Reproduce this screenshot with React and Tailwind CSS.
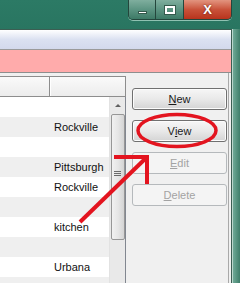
import React from 'react';

const rows = ['', 'Rockville', '', 'Pittsburgh', 'Rockville', '', 'kitchen', '', 'Urbana', ''];

const Btn = ({ children, disabled }) => (
  <div
    className={
      disabled
        ? 'h-[22px] w-[95px] rounded-[3px] border border-[#b5b9bc] bg-[#f4f4f4] text-[#a3a3a3] flex items-center justify-center text-[11px]'
        : 'h-[22px] w-[95px] rounded-[3px] border border-[#707070] bg-linear-to-b from-[#f6f6f6] via-[#e9e9e9] to-[#d4d4d4] text-[#1a1a1a] flex items-center justify-center text-[11px] shadow-[inset_0_0_0_1px_#fcfcfc]'
    }
  >
    {children}
  </div>
);

const Row = ({ text, odd }) => (
  <div className={`h-[20px] flex items-center ${odd ? 'bg-[#efefef]' : 'bg-white'}`}>
    <div className="w-[54px] shrink-0" />
    <span className="text-[11px] text-[#111]">{text}</span>
  </div>
);

export default function App() {
  return (
    <div
      className="relative w-[240px] h-[283px] overflow-hidden bg-linear-to-b from-[#2c7a65] via-[#1d6451] to-[#4e9580]"
      style={{ fontFamily: '"Liberation Sans", Arial, sans-serif' }}
    >
      {/* title bar */}
      <div className="h-[29px] flex">
        <div className="ml-auto mr-[8px] h-[20px] flex rounded-b-[5px] border border-t-0 border-[#24463c] overflow-hidden shadow-[0_1px_0_#8fc2b2]">
          <div className="w-[27px] h-full border-r border-[#24463c] bg-linear-to-b from-[#7fae9e] via-[#5c9482] to-[#3d7a66] flex items-center justify-center">
            <div className="w-[9px] h-[3px] bg-white border border-[#34594c] mt-[5px]" />
          </div>
          <div className="w-[28px] h-full border-r border-[#24463c] bg-linear-to-b from-[#7fae9e] via-[#5c9482] to-[#3d7a66] flex items-center justify-center">
            <div className="w-[10px] h-[8px] border-2 border-white outline outline-1 outline-[#34594c]" />
          </div>
          <div className="w-[47px] h-full bg-linear-to-b from-[#e2947f] via-[#c9523a] to-[#b8331c] flex items-center justify-center">
            <span className="text-white font-bold text-[13px] leading-none" style={{ textShadow: '0 0 2px #5a1a0c' }}>X</span>
          </div>
        </div>
      </div>

      {/* body */}
      <div className="flex h-[254px]">
        <div className="w-[232px] h-full border-r border-t border-[#3c5e53] bg-[#f0f0f0] flex flex-col">
          <div className="h-[20px] shrink-0 bg-linear-to-b from-white via-[#dbe1f1] to-[#d3d9ec] border-b border-[#9a9a9a]" />
          <div className="h-[22px] shrink-0 bg-[#ffabab]" />
          <div className="flex-1 flex border-t border-[#8e8e8e] min-h-0">
            {/* list view */}
            <div className="w-[126px] pt-[3px] flex flex-col">
              <div className="h-[21px] shrink-0 flex border-t border-b border-[#8d8d8d] border-r bg-linear-to-b from-[#fafafa] to-[#ececec]">
                <div className="w-[50px] border-r border-[#8d8d8d] shadow-[1px_0_0_#fff]" />
                <div className="flex-1" />
              </div>
              <div className="flex-1 flex border-r border-[#828790] min-h-0">
                <div className="w-[109px] overflow-hidden">
                  {rows.map((r, i) => (
                    <Row key={i} text={r} odd={i % 2 === 1} />
                  ))}
                </div>
                {/* scrollbar */}
                <div className="w-[16px] bg-[#e9e9e9] border-l border-[#e2e2e2] flex flex-col items-center">
                  <div className="h-[17px] w-full flex items-center justify-center">
                    <div className="w-0 h-0 border-l-[3px] border-r-[3px] border-b-[3px] border-l-transparent border-r-transparent border-b-[#606060]" />
                  </div>
                  <div className="w-[14px] h-[126px] rounded-[2px] border border-[#979797] bg-linear-to-r from-[#f1f1f1] via-[#e6e6e6] to-[#d4d4d4] flex items-center justify-center">
                    <div className="flex flex-col gap-[1px] -mt-[8px]">
                      <div className="w-[7px] h-[1px] bg-[#6b6b6b]" />
                      <div className="w-[7px] h-[1px] bg-[#6b6b6b]" />
                      <div className="w-[7px] h-[1px] bg-[#6b6b6b]" />
                    </div>
                  </div>
                </div>
              </div>
            </div>

            {/* buttons panel */}
            <div className="w-[103px] border-r border-[#a9a9a9] pt-[15px] pl-[6px] flex flex-col gap-[10px]">
              <Btn><span className="underline">N</span>ew</Btn>
              <Btn>V<span className="underline">i</span>ew</Btn>
              <Btn disabled><span className="underline">E</span>dit</Btn>
              <Btn disabled><span className="underline">D</span>elete</Btn>
            </div>
          </div>
        </div>
        <div className="flex-1 bg-linear-to-r from-[#6ea996] to-[#3f7f6b] border-l border-[#b9d6cc]" />
      </div>

      {/* red annotation */}
      <svg className="absolute inset-0 pointer-events-none" width="240" height="283" viewBox="0 0 240 283">
        <ellipse cx="177" cy="130.5" rx="39" ry="16" fill="none" stroke="#e3141f" strokeWidth="3.5" />
        <line x1="80" y1="222" x2="146" y2="158" stroke="#e3141f" strokeWidth="4" />
        <polyline points="114,157 147,157 147,184" fill="none" stroke="#e3141f" strokeWidth="4" strokeLinejoin="miter" />
      </svg>
    </div>
  );
}
